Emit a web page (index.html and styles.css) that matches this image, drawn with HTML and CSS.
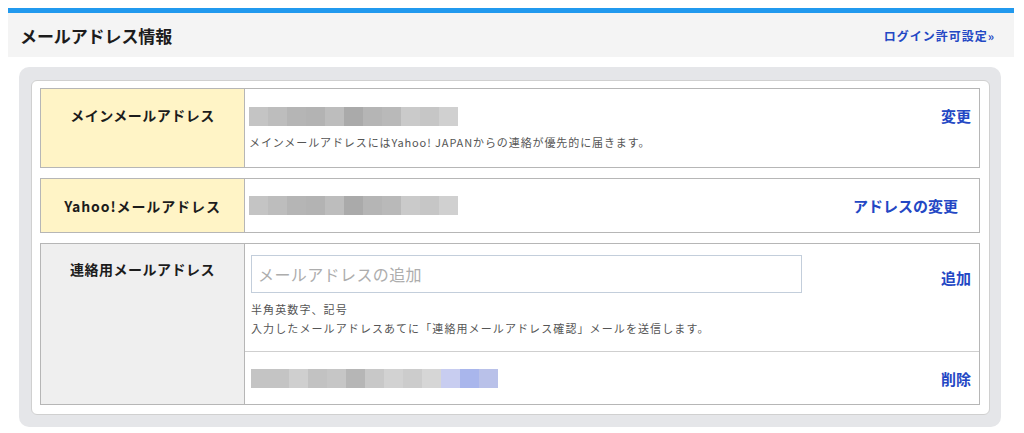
FILE: index.html
```html
<!DOCTYPE html>
<html lang="ja">
<head>
<meta charset="utf-8">
<title>メールアドレス情報</title>
<link rel="stylesheet" href="styles.css">
</head>
<body>
<div class="header">
  <h1 class="title">メールアドレス情報</h1>
  <a class="login" href="#">ログイン許可設定»</a>
</div>
<div class="outer">
  <div class="inner">
    <div class="row row1">
      <div class="label yellow">メインメールアドレス</div>
      <div class="cell">
        <div class="main">
          <div class="blur blur-a"></div>
          <p class="note">メインメールアドレスにはYahoo! JAPANからの連絡が優先的に届きます。</p>
        </div>
        <a class="act" href="#">変更</a>
      </div>
    </div>
    <div class="row row2">
      <div class="label yellow">Yahoo!メールアドレス</div>
      <div class="cell">
        <div class="blur blur-a"></div>
        <a class="act act-wide" href="#">アドレスの変更</a>
      </div>
    </div>
    <div class="row row3">
      <div class="label gray">連絡用メールアドレス</div>
      <div class="stack">
        <div class="sub sub-add">
          <div class="main">
            <input class="field" type="text" placeholder="メールアドレスの追加">
            <p class="note note-lines">半角英数字、記号<br>入力したメールアドレスあてに「連絡用メールアドレス確認」メールを送信します。</p>
          </div>
          <a class="act act-add" href="#">追加</a>
        </div>
        <div class="sub sub-del">
          <div class="blur blur-b"></div>
          <a class="act" href="#">削除</a>
        </div>
      </div>
    </div>
  </div>
</div>
</body>
</html>
```
FILE: styles.css
```css
* { box-sizing: border-box; }
body {
  margin: 8px 10px 0 8px;
  font-family: "Noto Sans CJK JP", "Noto Sans", sans-serif;
  background: #fff;
  color: #222;
}
.header {
  border-top: 5px solid #2199ee;
  background: #f4f4f4;
  height: 49px;
  display: flex;
  align-items: center;
  justify-content: space-between;
  padding: 0 19px 0 12px;
}
.title {
  margin: 0;
  font-size: 17px;
  font-weight: bold;
  color: #1c1c1c;
  letter-spacing: -0.1px;
}
.login {
  font-size: 12px;
  font-weight: bold;
  color: #2347c4;
  text-decoration: none;
  letter-spacing: 1px;
}
.outer {
  margin: 10px 13px 0 11px;
  background: #e5e6e9;
  border-radius: 10px;
  padding: 13px 11px 12px 12px;
}
.inner {
  background: #fff;
  border: 1px solid #d0d0d0;
  border-radius: 6px;
  padding: 7px 9px 9px 8px;
  display: flex;
  flex-direction: column;
  gap: 10px;
}
.row {
  display: flex;
  border: 1px solid #b6b6b6;
}
.row1 { height: 80px; }
.row2 { height: 55px; }
.row3 { height: 162px; }
.label {
  width: 204px;
  flex: none;
  border-right: 1px solid #b6b6b6;
  font-weight: bold;
  font-size: 14px;
  line-height: 20px;
  text-align: center;
  color: #1c1c1c;
  letter-spacing: 0.5px;
}
.yellow { background: #fff4c6; }
.gray { background: #efefef; }
.row1 .label { padding-top: 16px; }
.row2 .label { display: flex; align-items: center; justify-content: center; letter-spacing: 0.9px; }
.row3 .label { padding-top: 15px; }
.cell {
  flex: 1;
  display: flex;
  justify-content: space-between;
  padding: 0 8px 0 4px;
}
.row1 .cell { align-items: flex-start; padding-top: 18px; }
.row2 .cell { align-items: center; }
.main { display: flex; flex-direction: column; }
.blur {
  width: 209px;
  height: 19px;
}
.blur-a {
  background: linear-gradient(90deg,
    #c4c4c4 0 19px, #bdbdbd 19px 38px, #b5b5b5 38px 57px, #b3b3b3 57px 76px,
    #bdbdbd 76px 95px, #aaaaaa 95px 114px, #b5b5b5 114px 133px, #b9b9b9 133px 152px,
    #cacaca 152px 171px, #c6c6c6 171px 190px, #d0d0d0 190px 209px);
}
.blur-b {
  width: 247px;
  background: linear-gradient(90deg,
    #c4c4c4 0 19px, #c4c4c4 19px 38px, #cfcfcf 38px 57px, #c2c2c2 57px 76px,
    #c6c6c6 76px 95px, #b6b6b6 95px 114px, #c8c8c8 114px 133px, #d2d2d2 133px 152px,
    #cccccc 152px 171px, #d6d6d6 171px 190px, #c8cdf0 190px 209px, #a9b6ec 209px 228px,
    #b9c1e9 228px 247px);
}
.note {
  margin: 8px 0 0;
  font-size: 11px;
  line-height: 16px;
  color: #555;
  letter-spacing: 0.9px;
}
.note-lines {
  margin-top: 7px;
  line-height: 19px;
  letter-spacing: 1.1px;
}
.act {
  font-size: 15px;
  font-weight: bold;
  line-height: 17px;
  color: #2347c4;
  text-decoration: none;
  letter-spacing: 0;
}
.act-wide { margin-right: 13px; }
.act-add { margin-top: 14px; }
.stack {
  flex: 1;
  display: flex;
  flex-direction: column;
}
.sub {
  display: flex;
  justify-content: space-between;
  padding: 0 8px 0 6px;
}
.sub-add {
  height: 108px;
  border-bottom: 1px solid #cfcfcf;
  align-items: flex-start;
  padding-top: 11px;
}
.sub-del {
  flex: 1;
  align-items: center;
}
.field {
  width: 551px;
  height: 38px;
  border: 1px solid #c3cedb;
  padding: 0 6px;
  font-family: "Noto Sans CJK JP", "Noto Sans", sans-serif;
  font-size: 16px;
  color: #333;
  outline: none;
  letter-spacing: 0.4px;
}
.field::placeholder { color: #adadad; }
```
